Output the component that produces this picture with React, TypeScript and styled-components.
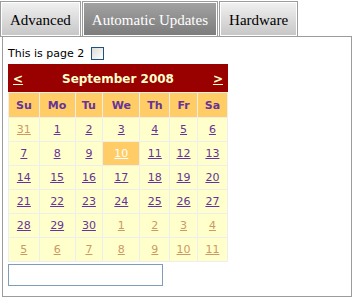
import React from 'react'
import styled, { createGlobalStyle } from 'styled-components'

const GlobalStyle = createGlobalStyle`
  body {
    margin: 0;
    background: #fff;
    font-family: "DejaVu Sans", Verdana, sans-serif;
  }
`

const Page = styled.div`
  width: 355px;
  height: 301px;
  padding-top: 1px;
  box-sizing: border-box;
`

const TabStrip = styled.div`
  position: relative;
  z-index: 1;
  display: flex;
  gap: 1px;
`

const Tab = styled.div<{ $active?: boolean }>`
  height: 36px;
  box-sizing: border-box;
  padding: 0 9px 0 9px;
  display: flex;
  align-items: center;
  border: 1px solid #9c9c9c;
  box-shadow: inset 0 0 0 1px #fff;
  background: ${p =>
    p.$active
      ? 'linear-gradient(#a3a3a3, #7b7b7b)'
      : 'linear-gradient(#f1f1f1, #c6c6c6)'};
  color: ${p => (p.$active ? '#fff' : '#000')};
  font-family: "Liberation Serif", "Times New Roman", serif;
  font-size: 15px;
  padding-top: 2px;
  white-space: nowrap;
`

const Panel = styled.div`
  margin: -1px 0 0 2px;
  width: 350px;
  height: 261px;
  box-sizing: border-box;
  border: 1px solid #9c9c9c;
  padding: 9px 5px 0;
  display: flex;
  flex-direction: column;
  align-items: flex-start;
`

const PageLine = styled.div`
  display: flex;
  align-items: center;
  height: 15px;
  font-size: 11px;
  color: #000;
`

const Check = styled.input`
  appearance: none;
  margin: 0 0 0 7px;
  width: 13px;
  height: 13px;
  box-sizing: border-box;
  border: 1px solid #1c5180;
  background: linear-gradient(135deg, #dcdcd7, #fff);
`

const Calendar = styled.table`
  margin-top: 3px;
  width: 220px;
  border-collapse: collapse;
  border: 1px solid #ffcc66;
  background: #ffffcc;
  font-size: 11px;
  color: #663399;
`

const TitleCell = styled.td`
  height: 27px;
  padding: 0 4px;
  background: #990000;
  color: #ffffcc;
  font-size: 12px;
  font-weight: bold;
  border: 1px solid #990000;
  border-bottom-color: #eee;
`

const TitleBar = styled.div`
  display: flex;
  align-items: center;
  justify-content: space-between;
`

const NavLink = styled.a`
  color: #ffffcc;
  text-decoration: underline;
  cursor: pointer;
`

const HeadCell = styled.th`
  height: 24px;
  padding: 0;
  background: #ffcc66;
  border: 1px solid #eee;
  font-weight: bold;
  color: #663399;
`

const DayCell = styled.td<{ $today?: boolean }>`
  height: 23px;
  padding: 0;
  text-align: center;
  border: 1px solid #eee;
  background: ${p => (p.$today ? '#ffcc66' : 'transparent')};
`

const DayLink = styled.a<{ $other?: boolean; $today?: boolean }>`
  color: ${p => (p.$today ? '#fff' : p.$other ? '#cc9966' : '#663399')};
  text-decoration: underline;
  cursor: pointer;
`

const TextBox = styled.input`
  margin-top: 2px;
  width: 155px;
  height: 22px;
  box-sizing: border-box;
  border: 1px solid #7f9db9;
  padding: 0 2px;
`

const dayNames = ['Su', 'Mo', 'Tu', 'We', 'Th', 'Fr', 'Sa']

type Day = { n: number; other?: boolean }

const buildWeeks = (): Day[][] => {
  const days: Day[] = [{ n: 31, other: true }]
  for (let i = 1; i <= 30; i++) days.push({ n: i })
  for (let i = 1; i <= 11; i++) days.push({ n: i, other: true })
  const weeks: Day[][] = []
  for (let i = 0; i < days.length; i += 7) weeks.push(days.slice(i, i + 7))
  return weeks
}

const weeks = buildWeeks()

export default function App() {
  return (
    <Page>
      <GlobalStyle />
      <TabStrip>
        <Tab>Advanced</Tab>
        <Tab $active>Automatic Updates</Tab>
        <Tab>Hardware</Tab>
      </TabStrip>
      <Panel>
        <PageLine>
          This is page 2
          <Check type="checkbox" />
        </PageLine>
        <Calendar>
          <tbody>
            <tr>
              <TitleCell colSpan={7}>
                <TitleBar>
                  <NavLink>&lt;</NavLink>
                  <span>September 2008</span>
                  <NavLink>&gt;</NavLink>
                </TitleBar>
              </TitleCell>
            </tr>
            <tr>
              {dayNames.map(d => (
                <HeadCell key={d}>{d}</HeadCell>
              ))}
            </tr>
            {weeks.map((week, wi) => (
              <tr key={wi}>
                {week.map((d, di) => {
                  const today = !d.other && d.n === 10
                  return (
                    <DayCell key={di} $today={today}>
                      <DayLink $other={d.other} $today={today}>
                        {d.n}
                      </DayLink>
                    </DayCell>
                  )
                })}
              </tr>
            ))}
          </tbody>
        </Calendar>
        <TextBox type="text" />
      </Panel>
    </Page>
  )
}
